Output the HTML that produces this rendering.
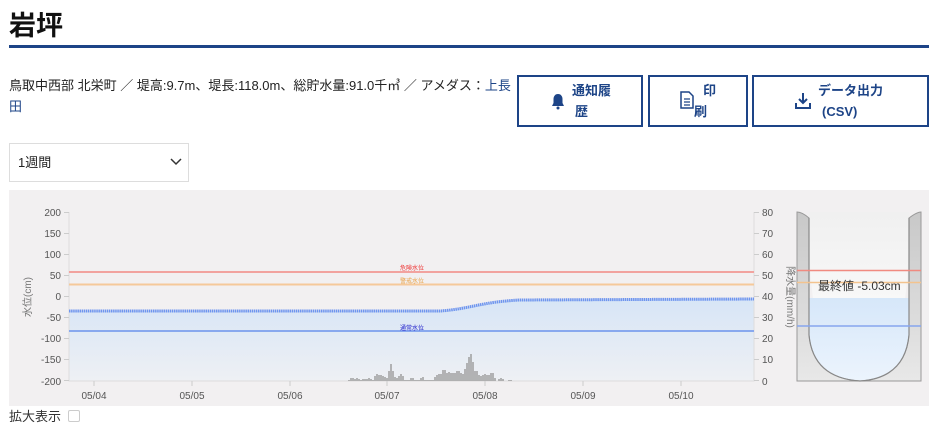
<!DOCTYPE html>
<html><head><meta charset="utf-8">
<style>
body{margin:0;width:940px;height:428px;background:#fff;font-family:"Liberation Sans","Noto Sans CJK JP",sans-serif;color:#222;position:relative;overflow:hidden}
.a{position:absolute}
h1{position:absolute;left:9px;top:4px;margin:0;font-size:27px;font-weight:bold;color:#111}
.rule{left:9px;top:45px;width:920px;height:3px;background:#1d4487}
.info{left:9px;top:75px;font-size:13px;line-height:21px;width:510px;color:#222}
.info span{color:#1d4487}
.btn{border:2px solid #1d4487;box-sizing:border-box;top:75px;height:52px;color:#1d4487;font-weight:bold;font-size:13px;line-height:20px}
.sel{left:9px;top:143px;width:180px;height:39px;border:1px solid #ddd;box-sizing:border-box;font-size:13px;line-height:37px;padding-left:8px}
</style></head><body>
<h1>岩坪</h1>
<div class="a rule"></div>
<div class="a info">鳥取中西部 北栄町 ／ 堤高:9.7m、堤長:118.0m、総貯水量:91.0千㎥ ／ アメダス：<span>上長<br>田</span></div>
<div class="a btn" style="left:517px;width:126px">
 <svg class="a" style="left:32px;top:16px" width="14" height="17" viewBox="0 0 14 17"><path d="M7 1c-3 0-4.5 2.5-4.5 5v4L1 13h12l-1.5-3V6C11.5 3.5 10 1 7 1z" fill="#1d4487"/><circle cx="7" cy="15" r="1.5" fill="#1d4487"/></svg>
 <div class="a" style="left:53px;top:4px">通知履</div><div class="a" style="left:56px;top:25px">歴</div></div>
<div class="a btn" style="left:648px;width:100px">
 <svg class="a" style="left:30px;top:14px" width="14" height="18" viewBox="0 0 14 18"><path d="M1 1h8l4 4v12H1z" fill="none" stroke="#1d4487" stroke-width="1.5"/><path d="M4 8h6M4 11h6M4 14h6" stroke="#1d4487" stroke-width="1.3"/></svg>
 <div class="a" style="left:53px;top:4px">印</div><div class="a" style="left:44px;top:25px">刷</div></div>
<div class="a btn" style="left:752px;width:177px">
 <svg class="a" style="left:40px;top:15px" width="18" height="18" viewBox="0 0 18 18"><path d="M9 1v10M5 7l4 4 4-4" fill="none" stroke="#1d4487" stroke-width="2"/><path d="M2 11v5h14v-5" fill="none" stroke="#1d4487" stroke-width="2"/></svg>
 <div class="a" style="left:64px;top:4px">データ出力</div><div class="a" style="left:68px;top:25px">(CSV)</div></div>
<div class="a sel">1週間<svg class="a" style="left:160px;top:14px" width="12" height="8" viewBox="0 0 12 8"><path d="M1 1l5 5 5-5" fill="none" stroke="#333" stroke-width="1.5"/></svg></div>

<svg class="a" style="left:0;top:0" width="940" height="428" viewBox="0 0 940 428" font-family="Liberation Sans, Noto Sans CJK JP, sans-serif">
<defs>
<linearGradient id="wf" x1="0" y1="0" x2="0" y2="1"><stop offset="0" stop-color="#d7e5f6"/><stop offset="1" stop-color="#eef0f4"/></linearGradient>
<linearGradient id="tk" x1="0" y1="0" x2="0" y2="1"><stop offset="0" stop-color="#f0f0f0"/><stop offset="1" stop-color="#fff"/></linearGradient>
<linearGradient id="tw" x1="0" y1="0" x2="0" y2="1"><stop offset="0" stop-color="#d6e7f9"/><stop offset="1" stop-color="#ecf4fd"/></linearGradient>
<linearGradient id="wall" x1="0" y1="0" x2="0" y2="1"><stop offset="0" stop-color="#c8c8c8"/><stop offset="1" stop-color="#e8e8e8"/></linearGradient>
</defs>
<rect x="9" y="190" width="920" height="216" fill="#f2f0f1"/>
<path d="M69 311 L440 311 C470 309 480 302 520 300 L754 299 L754 381 L69 381Z" fill="url(#wf)"/>
<path d="M69 212V381H754V212" fill="none" stroke="#ddd" stroke-width="1"/>
<g stroke="#ccc"><path d="M64 212.5h5M64 233.5h5M64 254.5h5M64 275.5h5M64 296.5h5M64 317.5h5M64 338.5h5M64 359.5h5M64 380.5h5M754 212.5h5M754 233.5h5M754 254.5h5M754 275.5h5M754 296.5h5M754 317.5h5M754 338.5h5M754 359.5h5M754 380.5h5M94 381v5M192 381v5M290 381v5M387 381v5M485 381v5M583 381v5M681 381v5"/></g>
<g font-size="10" fill="#555" text-anchor="end">
<text x="61" y="216">200</text><text x="61" y="237">150</text><text x="61" y="258">100</text><text x="61" y="279">50</text><text x="61" y="300">0</text><text x="61" y="321">-50</text><text x="61" y="342">-100</text><text x="61" y="363">-150</text><text x="61" y="385">-200</text>
</g>
<g font-size="10" fill="#555"><text x="762" y="216">80</text><text x="762" y="237">70</text><text x="762" y="258">60</text><text x="762" y="279">50</text><text x="762" y="300">40</text><text x="762" y="321">30</text><text x="762" y="342">20</text><text x="762" y="363">10</text><text x="762" y="385">0</text></g>
<g font-size="10" fill="#555" text-anchor="middle"><text x="94" y="399">05/04</text><text x="192" y="399">05/05</text><text x="290" y="399">05/06</text><text x="387" y="399">05/07</text><text x="485" y="399">05/08</text><text x="583" y="399">05/09</text><text x="681" y="399">05/10</text></g>
<text transform="translate(31,297) rotate(-90)" font-size="10" fill="#777" text-anchor="middle">水位(cm)</text>
<text transform="translate(787,297) rotate(90)" font-size="10" fill="#777" text-anchor="middle">降水量(mm/h)</text>
<path d="M69 272H754" stroke="#f2a39f" stroke-width="2"/>
<path d="M69 284.5H754" stroke="#f5c99a" stroke-width="2"/>
<path d="M69 331H754" stroke="#88a8ee" stroke-width="2"/>
<g font-size="6" text-anchor="middle"><text x="412" y="270" fill="#e33">危険水位</text><text x="412" y="283" fill="#e9a34a">警戒水位</text><text x="412" y="330" fill="#22c">通常水位</text></g>
<path d="M69 311 L440 311 C470 309 480 302 520 300 L754 299" fill="none" stroke="#6f95ee" stroke-width="3" stroke-dasharray="1.5 0.6"/>
<path stroke="#999" stroke-width="1.4" d="M349 381v-1M351 381v-3M353 381v-3M355 381v-2M357 381v-3M359 381v-2M361 381v-1M363 381v-2M365 381v-2M367 381v-2M369 381v-3M371 381v-2M373 381v-1M375 381v-5M377 381v-7M379 381v-6M381 381v-6M383 381v-5M385 381v-4M387 381v-3M389 381v-10M391 381v-17M393 381v-10M395 381v-4M397 381v-3M399 381v-5M401 381v-7M403 381v-5M405 381v-1M407 381v-1M409 381v-1M411 381v-3M413 381v-3M415 381v-1M417 381v-1M419 381v-1M421 381v-3M423 381v-4M425 381v-1M427 381v-1M429 381v-1M431 381v-1M433 381v-1M435 381v-4M437 381v-6M439 381v-7M441 381v-7M443 381v-11M445 381v-11M447 381v-8M449 381v-9M451 381v-8M453 381v-8M455 381v-8M457 381v-10M459 381v-10M461 381v-8M463 381v-7M465 381v-12M467 381v-18M469 381v-24M471 381v-27M473 381v-19M475 381v-10M477 381v-10M479 381v-6M481 381v-5M483 381v-6M485 381v-7M487 381v-6M489 381v-6M491 381v-8M493 381v-8M495 381v-3M499 381v-2M501 381v-3M503 381v-2M509 381v-1M511 381v-1"/>
<!-- tank -->
<path d="M809 222 Q809 381 860 381 Q909 381 909 222 V212 H809Z" fill="url(#tk)"/>
<path d="M809 298 H909 V330 Q909 381 860 381 Q809 381 809 330Z" fill="url(#tw)"/>
<path d="M797 212 V381 H921 V212 Q917 212 909 218 V335 Q905 378 860 381 Q813 378 809 335 V218 Q802 212 797 212Z" fill="url(#wall)" stroke="#999" stroke-width="1"/>
<path d="M809 218 V335 Q813 378 860 381 Q905 378 909 335 V218" fill="none" stroke="#888" stroke-width="1.2"/>
<path d="M797 270.5H921" stroke="#f08a80" stroke-width="1.5"/>
<path d="M797 282.5H921" stroke="#f3c38e" stroke-width="1.5"/>
<path d="M797 326H921" stroke="#86a5ee" stroke-width="1.5"/>
<text x="818" y="290" font-size="12" fill="#333">最終値 -5.03cm</text>
</svg>
<div class="a" style="left:9px;top:406px;font-size:13px;color:#333">拡大表示</div>
<div class="a" style="left:68px;top:410px;width:10px;height:10px;border:1px solid #ccc;border-radius:2px"></div>
</body></html>
